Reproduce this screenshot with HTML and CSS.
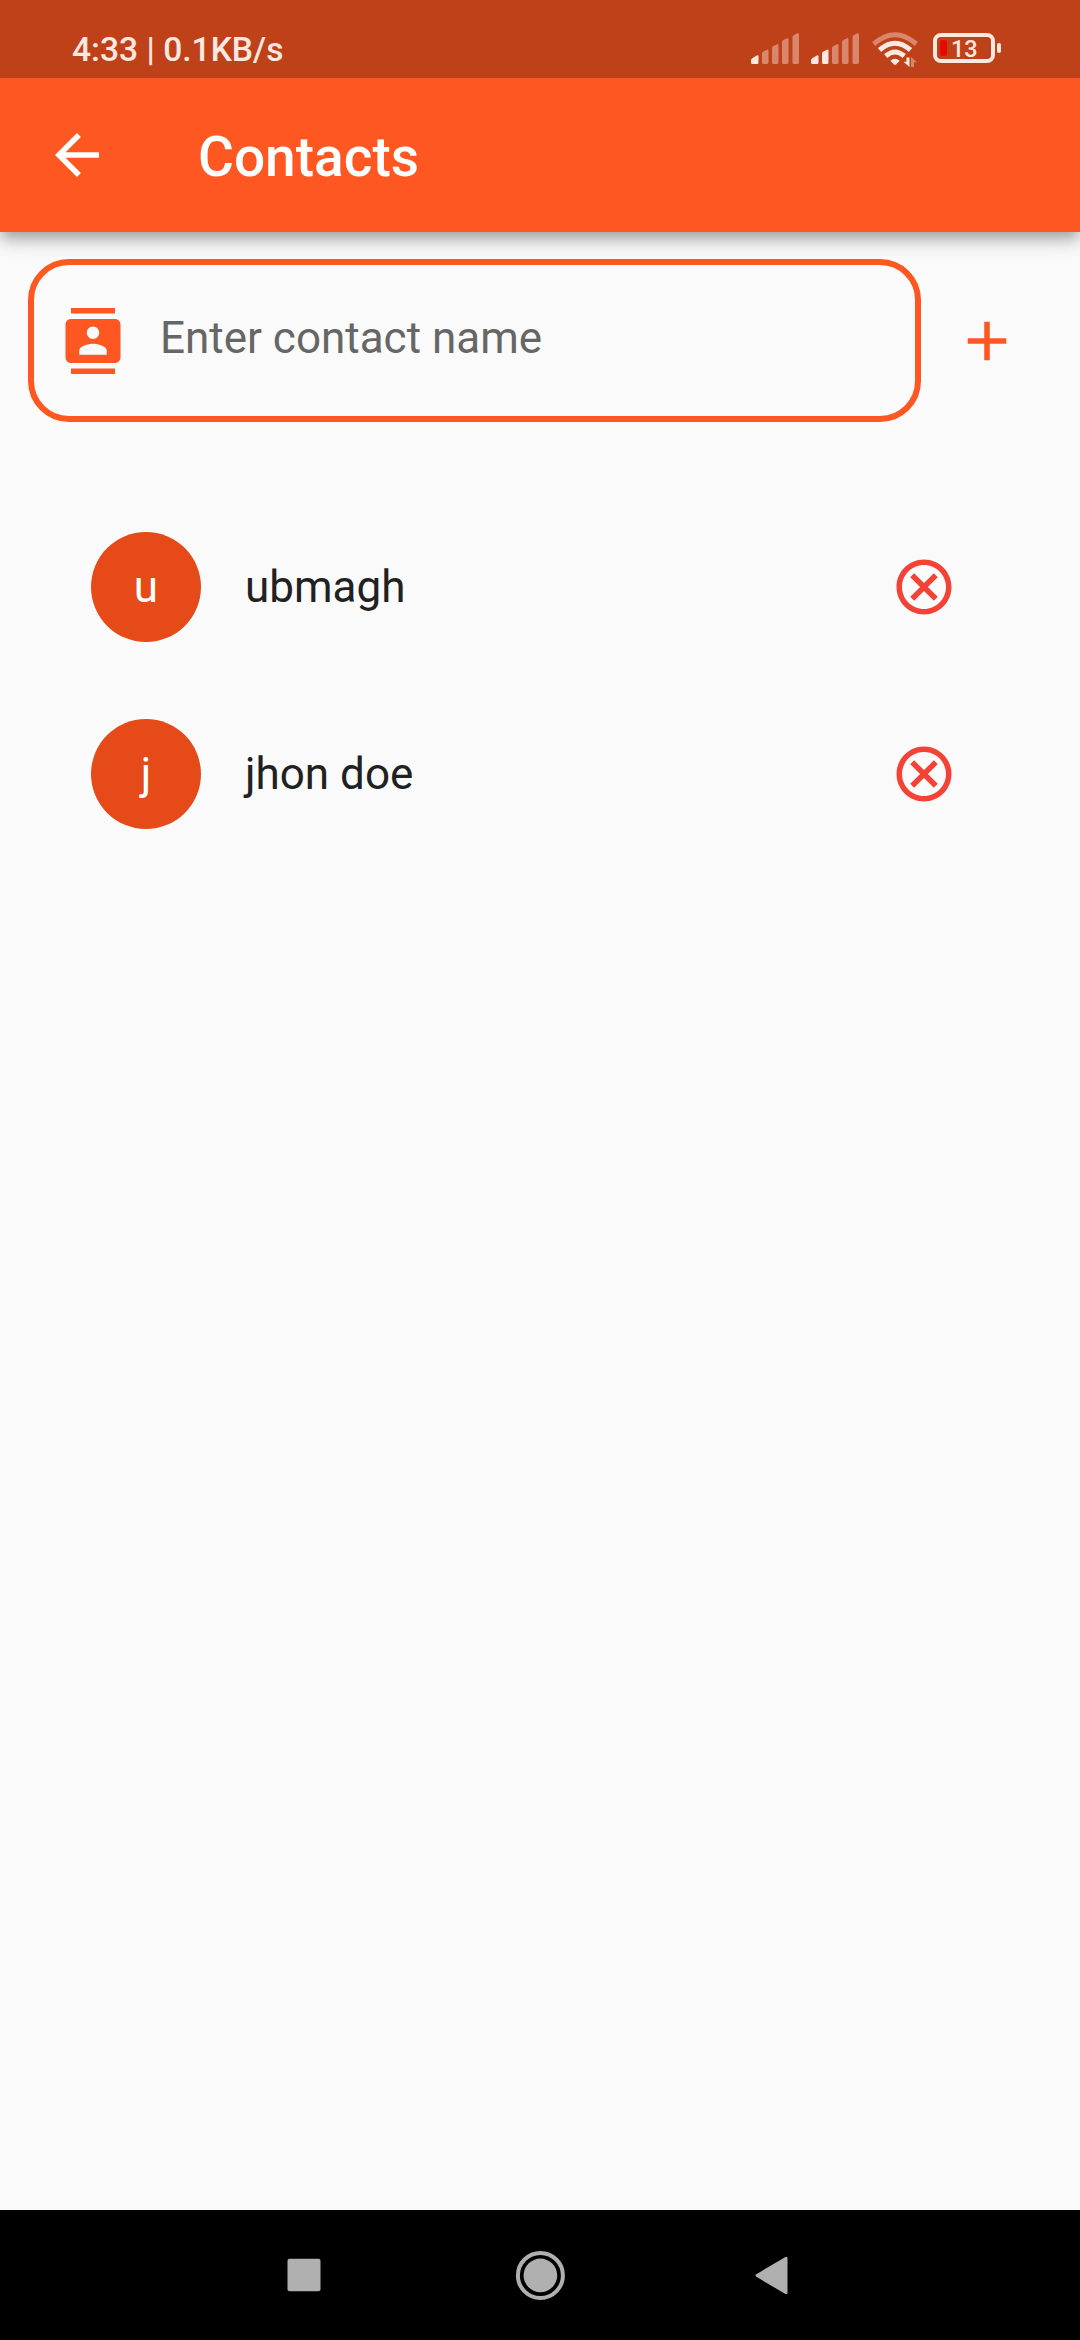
FILE: index.html
```html
<!DOCTYPE html>
<html lang="en">
<head>
<meta charset="utf-8">
<title>Contacts</title>
<link rel="stylesheet" href="styles.css">
</head>
<body>
<div class="screen">
  <header class="status-bar">
    <span class="clock">4:33 | 0.1KB/s</span>
    <div class="indicators">
      <svg class="signal" viewBox="0 0 48 32">
        <path class="on" d="M0 27.5 Q0 26 1.3 25.2 L5.8 22.4 Q7.5 21.6 7.5 23.5 V29.5 Q7.5 31 6 31 H1.5 Q0 31 0 29.5z"/>
        <path class="off" d="M11 20.500 Q11 19.500 12 18.800 L16 16.700 Q17.500 16.200 17.500 18 V29.500 Q17.500 31 16 31 H12.500 Q11 31 11 29.500zM21 15 Q21 14 22 13.300 L26 11.200 Q27.500 10.700 27.500 12.500 V29.500 Q27.500 31 26 31 H22.500 Q21 31 21 29.500zM31 9 Q31 8 32 7.300 L36 5.200 Q37.500 4.700 37.500 6.500 V29.500 Q37.500 31 36 31 H32.500 Q31 31 31 29.500zM41.500 4 Q41.500 3 42.500 2.300 L46.500 .3 Q48 0 48 1.500 V29.500 Q48 31 46.500 31 H43 Q41.500 31 41.500 29.500z"/>
      </svg>
      <svg class="signal" viewBox="0 0 48 32">
        <path class="on" d="M0 27.5 Q0 26 1.3 25.2 L5.8 22.4 Q7.5 21.6 7.5 23.5 V29.5 Q7.5 31 6 31 H1.5 Q0 31 0 29.5zM11 20.500 Q11 19.500 12 18.800 L16 16.700 Q17.500 16.200 17.500 18 V29.500 Q17.500 31 16 31 H12.500 Q11 31 11 29.500z"/>
        <path class="off" d="M21 15 Q21 14 22 13.300 L26 11.200 Q27.500 10.700 27.500 12.500 V29.500 Q27.500 31 26 31 H22.500 Q21 31 21 29.500zM31 9 Q31 8 32 7.300 L36 5.200 Q37.500 4.700 37.500 6.500 V29.500 Q37.500 31 36 31 H32.500 Q31 31 31 29.500zM41.500 4 Q41.500 3 42.500 2.300 L46.500 .3 Q48 0 48 1.500 V29.500 Q48 31 46.500 31 H43 Q41.500 31 41.500 29.500z"/>
      </svg>
      <svg class="wifi" viewBox="0 0 48 36">
        <g fill="none" stroke-width="5">
          <path class="arc dim" d="M1.700 12 Q23 -6.500 44.300 12"/>
          <path class="arc" d="M7.500 18 Q23 4.500 38.500 18"/>
          <path class="arc" d="M13.700 24 Q23 16 32.300 24"/>
        </g>
        <path class="on" d="M18.300 28.700 Q23 25 27.700 28.700 L24 32.500 Q23 33.400 22 32.500z"/>
        <path class="on" d="M37.500 25.500 V35 L31.500 29.800 H34.500 V25.500z"/>
        <path class="off" d="M39 35 V25 L45 30.300 H42 V35z"/>
      </svg>
      <div class="battery">
        <div class="cell"><span class="charge"></span><span class="percent">13</span></div>
        <span class="terminal"></span>
      </div>
    </div>
  </header>
  <div class="app-bar">
    <svg class="icon" viewBox="0 0 24 24"><path d="M20 11H7.830l5.590-5.590L12 4l-8 8 8 8 1.410-1.410L7.830 13H20v-2z"/></svg>
    <h1 class="title">Contacts</h1>
  </div>
  <main class="content">
    <div class="entry">
      <div class="field">
        <svg class="icon" viewBox="0 0 24 24"><path d="M20 0H4v2h16V0zM4 24h16v-2H4v2zM20 4H4c-1.100 0-2 .9-2 2v12c0 1.100.9 2 2 2h16c1.100 0 2-.9 2-2V6c0-1.100-.9-2-2-2zm-8 2.750c1.240 0 2.250 1.010 2.250 2.250s-1.010 2.250-2.250 2.250S9.750 10.240 9.750 9 10.760 6.750 12 6.750zM17 17H7v-1.500c0-1.670 3.330-2.500 5-2.500s5 .83 5 2.500V17z"/></svg>
        <span class="placeholder">Enter contact name</span>
      </div>
      <svg class="icon add" viewBox="0 0 24 24"><path d="M19 13h-6v6h-2v-6H5v-2h6V5h2v6h6v2z"/></svg>
    </div>
    <ul class="contacts">
      <li class="contact">
        <span class="avatar">u</span>
        <span class="name">ubmagh</span>
        <svg class="icon remove" viewBox="0 0 24 24"><path d="M12 2C6.470 2 2 6.470 2 12s4.470 10 10 10 10-4.470 10-10S17.530 2 12 2zm0 18c-4.410 0-8-3.590-8-8s3.590-8 8-8 8 3.590 8 8-3.590 8-8 8zm3.590-13L12 10.590 8.410 7 7 8.410 10.590 12 7 15.590 8.410 17 12 13.410 15.590 17 17 15.590 13.410 12 17 8.410z"/></svg>
      </li>
      <li class="contact">
        <span class="avatar">j</span>
        <span class="name">jhon doe</span>
        <svg class="icon remove" viewBox="0 0 24 24"><path d="M12 2C6.470 2 2 6.470 2 12s4.470 10 10 10 10-4.470 10-10S17.530 2 12 2zm0 18c-4.410 0-8-3.590-8-8s3.590-8 8-8 8 3.590 8 8-3.590 8-8 8zm3.590-13L12 10.590 8.410 7 7 8.410 10.590 12 7 15.590 8.410 17 12 13.410 15.590 17 17 15.590 13.410 12 17 8.410z"/></svg>
      </li>
    </ul>
  </main>
  <nav class="nav-bar">
    <svg class="nav-icon" viewBox="0 0 50 50"><rect x="8.500" y="8.700" width="33" height="32.500" rx="2"/></svg>
    <svg class="nav-icon" viewBox="0 0 50 50"><circle cx="25.400" cy="25.400" r="16.800"/><circle class="ring" cx="25.400" cy="25.400" r="22.500"/></svg>
    <svg class="nav-icon" viewBox="0 0 50 50"><path d="M5.700 24 L34 7.200 Q36.500 6 36.500 8.500 V42.500 Q36.500 45 34 43.800 L5.700 27 Q3 25.500 5.700 24z"/></svg>
  </nav>
</div>
</body>
</html>
```

FILE: styles.css
```css
* {
  box-sizing: border-box;
}

body {
  margin: 0;
  font-family: Roboto, sans-serif;
}

.screen {
  display: flex;
  flex-direction: column;
  width: 1080px;
  height: 2340px;
  background: #fafafa;
}

.status-bar {
  position: relative;
  z-index: 1;
  display: flex;
  justify-content: space-between;
  height: 78px;
  padding: 0 80px 0 72px;
  background: #bf4119;
  color: #ffe8e0;
}

.clock {
  padding-top: 30px;
  font-size: 33.600px;
  line-height: 40px;
  font-weight: 500;
  white-space: nowrap;
}

.indicators {
  display: flex;
  align-items: flex-start;
  padding-top: 33px;
}

.signal {
  width: 48px;
  height: 32px;
  margin-right: 12px;
}

.on {
  fill: #ffe8e0;
}

.off {
  fill: #d9866c;
}

.wifi {
  width: 48px;
  height: 36px;
  margin: -1px 13px 0 1px;
}

.arc {
  stroke: #ffe8e0;
}

.dim {
  stroke: #d9866c;
}

.battery {
  display: flex;
  align-items: center;
  gap: 2px;
  margin-right: -1px;
}

.cell {
  display: flex;
  align-items: center;
  width: 62px;
  height: 30px;
  padding-left: 3px;
  border: 4px solid #ffe8e0;
  border-radius: 8px;
}

.charge {
  width: 7px;
  height: 16px;
  border-radius: 2px;
  background: #e60a00;
}

.percent {
  margin: 2px 0 0 4px;
  font-size: 23.500px;
  line-height: 22px;
  font-weight: 500;
}

.terminal {
  width: 4px;
  height: 10px;
  border-radius: 2px;
  background: #ffe8e0;
}

.app-bar {
  display: flex;
  align-items: center;
  height: 154px;
  padding-left: 44px;
  background: #ff5722;
  color: #fff;
  box-shadow: 0 5.500px 11px -2.750px rgba(0, 0, 0, .2), 0 11px 13.750px rgba(0, 0, 0, .14), 0 2.750px 27.500px rgba(0, 0, 0, .12);
}

.icon {
  flex: none;
  width: 66px;
  height: 66px;
  fill: currentColor;
}

.title {
  margin: 3px 0 0 88px;
  font-size: 55px;
  line-height: 64px;
  font-weight: 500;
}

.content {
  flex: 1;
  padding-top: 27px;
}

.entry {
  display: flex;
  align-items: center;
  padding-left: 27.500px;
  color: #ff5722;
}

.field {
  display: flex;
  align-items: center;
  width: 893px;
  height: 163px;
  padding-left: 26.500px;
  border: 6px solid #ff5722;
  border-radius: 41px;
}

.placeholder {
  margin: -6px 0 0 34px;
  font-size: 44px;
  line-height: 52px;
  color: #666;
}

.add {
  margin-left: 33px;
}

.contacts {
  margin: 0;
  padding: 110px 123.500px 0 91px;
  list-style: none;
}

.contact {
  display: flex;
  align-items: center;
  height: 110px;
  margin-bottom: 77px;
}

.avatar {
  width: 110px;
  height: 110px;
  border-radius: 50%;
  background: #e64a19;
  color: #fff;
  font-size: 44px;
  line-height: 110px;
  text-align: center;
}

.name {
  flex: 1;
  margin-left: 44px;
  font-size: 44px;
  line-height: 52px;
  color: #212121;
}

.remove {
  color: #f44336;
}

.nav-bar {
  display: flex;
  justify-content: center;
  gap: 186px;
  height: 130px;
  padding-top: 40px;
  background: #000;
}

.nav-icon {
  width: 50px;
  height: 50px;
  fill: #b0b0b0;
}

.ring {
  fill: none;
  stroke: #b0b0b0;
  stroke-width: 4;
}
```
